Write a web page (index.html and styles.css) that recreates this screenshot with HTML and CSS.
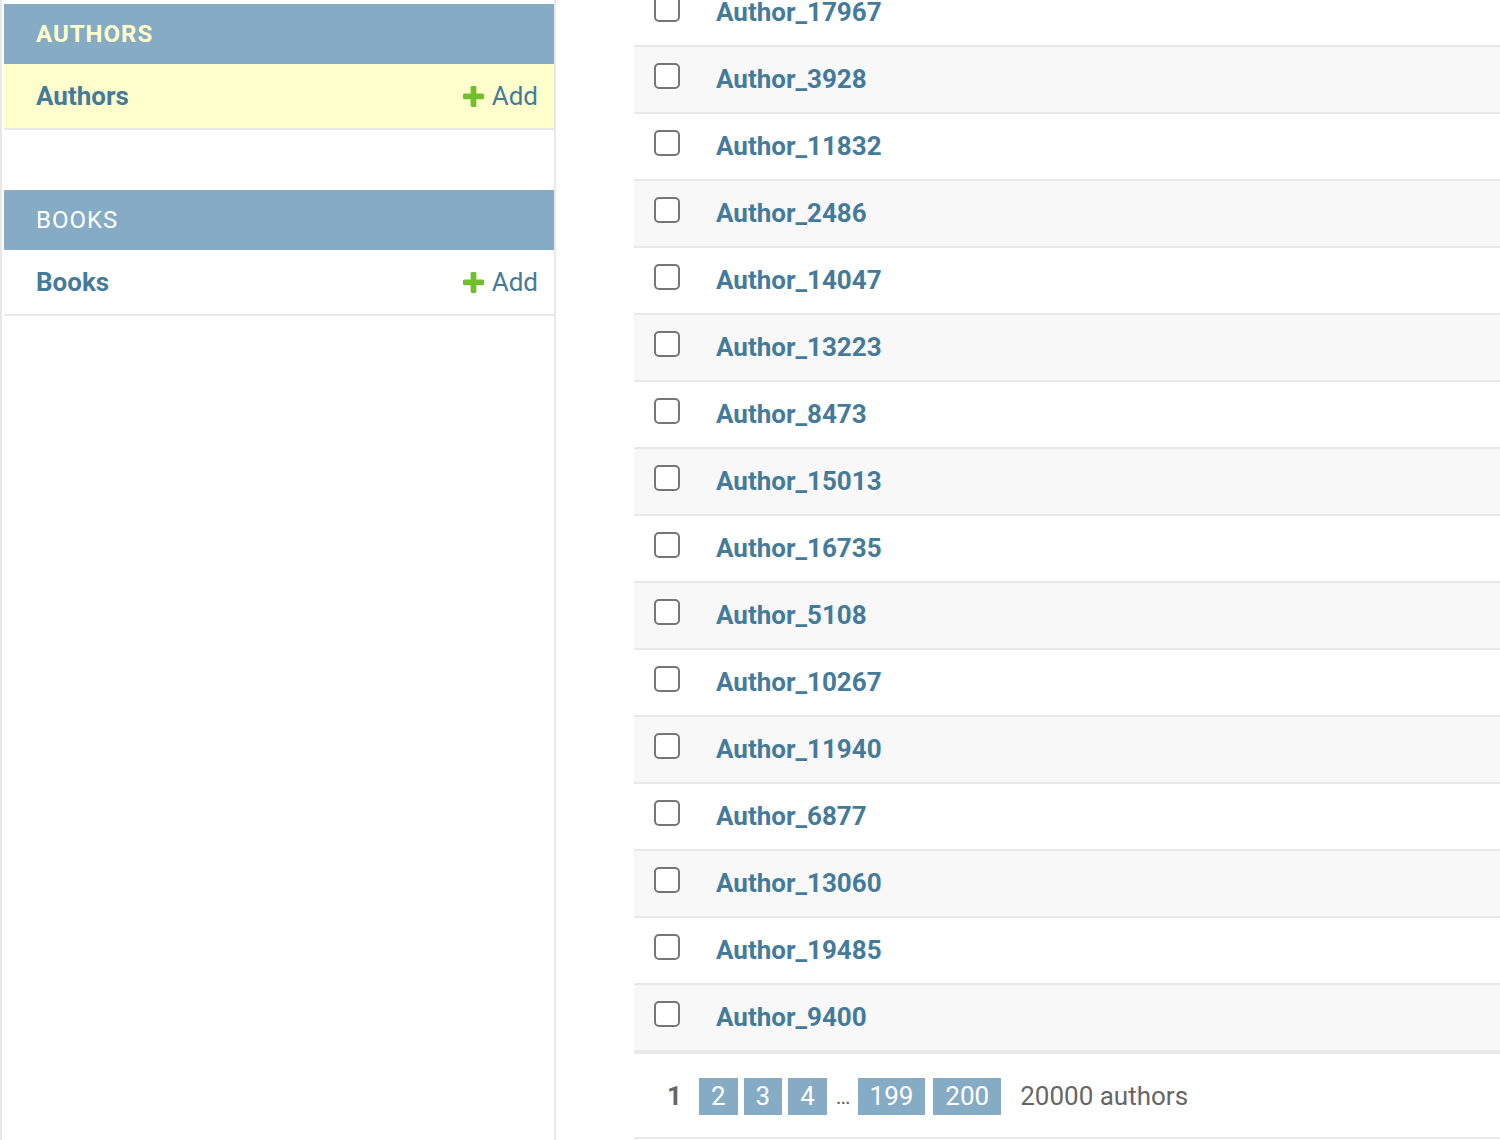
FILE: index.html
```html
<!DOCTYPE html>
<html lang="en">
<head>
<meta charset="utf-8">
<title>Select author to change</title>
<link rel="stylesheet" href="styles.css">
</head>
<body>
<div class="page">
  <div class="edge"></div>
  <nav class="sidebar">
    <div class="module current-app">
      <div class="caption">Authors</div>
      <div class="model-row selected">
        <a class="model" href="#">Authors</a>
        <a class="addlink" href="#"><svg class="plus" viewBox="192 192 1408 1408" width="21" height="21"><path fill="#70bf2b" d="M1600 796v192q0 40-28 68t-68 28h-416v416q0 40-28 68t-68 28h-192q-40 0-68-28t-28-68v-416h-416q-40 0-68-28t-28-68v-192q0-40 28-68t68-28h416v-416q0-40 28-68t68-28h192q40 0 68 28t28 68v416h416q40 0 68 28t28 68z"/></svg>Add</a>
      </div>
    </div>
    <div class="module">
      <div class="caption">Books</div>
      <div class="model-row">
        <a class="model" href="#">Books</a>
        <a class="addlink" href="#"><svg class="plus" viewBox="192 192 1408 1408" width="21" height="21"><path fill="#70bf2b" d="M1600 796v192q0 40-28 68t-68 28h-416v416q0 40-28 68t-68 28h-192q-40 0-68-28t-28-68v-416h-416q-40 0-68-28t-28-68v-192q0-40 28-68t68-28h416v-416q0-40 28-68t68-28h192q40 0 68 28t28 68v416h416q40 0 68 28t28 68z"/></svg>Add</a>
      </div>
    </div>
  </nav>
  <main class="content">
    <div class="results">
      <div class="row"><input type="checkbox" class="check"><a href="#">Author_17967</a></div>
      <div class="row"><input type="checkbox" class="check"><a href="#">Author_3928</a></div>
      <div class="row"><input type="checkbox" class="check"><a href="#">Author_11832</a></div>
      <div class="row"><input type="checkbox" class="check"><a href="#">Author_2486</a></div>
      <div class="row"><input type="checkbox" class="check"><a href="#">Author_14047</a></div>
      <div class="row"><input type="checkbox" class="check"><a href="#">Author_13223</a></div>
      <div class="row"><input type="checkbox" class="check"><a href="#">Author_8473</a></div>
      <div class="row"><input type="checkbox" class="check"><a href="#">Author_15013</a></div>
      <div class="row"><input type="checkbox" class="check"><a href="#">Author_16735</a></div>
      <div class="row"><input type="checkbox" class="check"><a href="#">Author_5108</a></div>
      <div class="row"><input type="checkbox" class="check"><a href="#">Author_10267</a></div>
      <div class="row"><input type="checkbox" class="check"><a href="#">Author_11940</a></div>
      <div class="row"><input type="checkbox" class="check"><a href="#">Author_6877</a></div>
      <div class="row"><input type="checkbox" class="check"><a href="#">Author_13060</a></div>
      <div class="row"><input type="checkbox" class="check"><a href="#">Author_19485</a></div>
      <div class="row"><input type="checkbox" class="check"><a href="#">Author_9400</a></div>
    </div>
    <div class="paginator">
      <span class="this-page">1</span>
      <a class="page-link" href="#">2</a>
      <a class="page-link" href="#">3</a>
      <a class="page-link" href="#">4</a>
      <span class="dots">…</span>
      <a class="page-link" href="#">199</a>
      <a class="page-link end" href="#">200</a>
      <span class="count">20000 authors</span>
    </div>
  </main>
</div>
</body>
</html>
```

FILE: styles.css
```css
html, body {
  margin: 0;
  padding: 0;
  height: 100%;
  overflow: hidden;
  background: #fff;
}

body {
  font-family: Roboto, "Liberation Sans", sans-serif;
  color: #333;
}

a {
  text-decoration: none;
  color: #457b9a;
}

.page {
  display: flex;
  height: 1140px;
}

.edge {
  flex: none;
  width: 2px;
  margin-right: 2px;
  background: #e8e8e8;
}

.sidebar {
  flex: none;
  width: 550px;
  padding-top: 4px;
  border-right: 2px solid #e8e8e8;
}

.module {
  margin-bottom: 60px;
}

.caption {
  background: #85abc5;
  color: #fff;
  font-size: 24px;
  line-height: 28px;
  padding: 16px 32px;
  text-transform: uppercase;
  letter-spacing: 1px;
}

.current-app .caption {
  color: #ffc;
  font-weight: 700;
}

.model-row {
  display: flex;
  justify-content: space-between;
  align-items: center;
  padding: 16px 16px 16px 32px;
  font-size: 26px;
  line-height: 32px;
  border-bottom: 2px solid #e8e8e8;
}

.model-row.selected {
  background: #ffc;
}

.model {
  font-weight: 700;
}

.addlink {
  display: flex;
  align-items: center;
  gap: 8px;
}

.plus {
  display: block;
}

.content {
  flex: 1;
  min-width: 0;
  padding-left: 78px;
  overflow: hidden;
}

.results {
  margin-top: -20px;
}

.row {
  display: flex;
  align-items: flex-start;
  height: 67px;
  box-sizing: border-box;
  padding-top: 16px;
  border-bottom: 2px solid #e8e8e8;
  font-size: 26px;
  line-height: 32px;
}

.row:nth-child(even) {
  background: #f8f8f8;
}

.check {
  appearance: none;
  -webkit-appearance: none;
  flex: none;
  margin: 0 0 0 20px;
  width: 26px;
  height: 26px;
  box-sizing: border-box;
  border: 2px solid #767676;
  border-radius: 5px;
  background: #fff;
}

.row a {
  margin-left: 36px;
  font-weight: 700;
}

.paginator {
  display: flex;
  align-items: center;
  height: 44px;
  padding: 20px 0 19px;
  border-top: 2px solid #e8e8e8;
  border-bottom: 2px solid #e8e8e8;
  font-size: 26px;
  color: #666;
}

.this-page {
  margin-left: 33px;
  margin-right: 17px;
  font-weight: 700;
}

.page-link {
  background: #85abc5;
  color: #fff;
  padding: 0 12px;
  height: 37px;
  line-height: 37px;
  margin-right: 6px;
}

.page-link.end {
  margin-left: 2px;
}

.dots {
  margin: 0 7px 0 3px;
  font-size: 22px;
}

.count {
  margin-left: 13px;
}
```
